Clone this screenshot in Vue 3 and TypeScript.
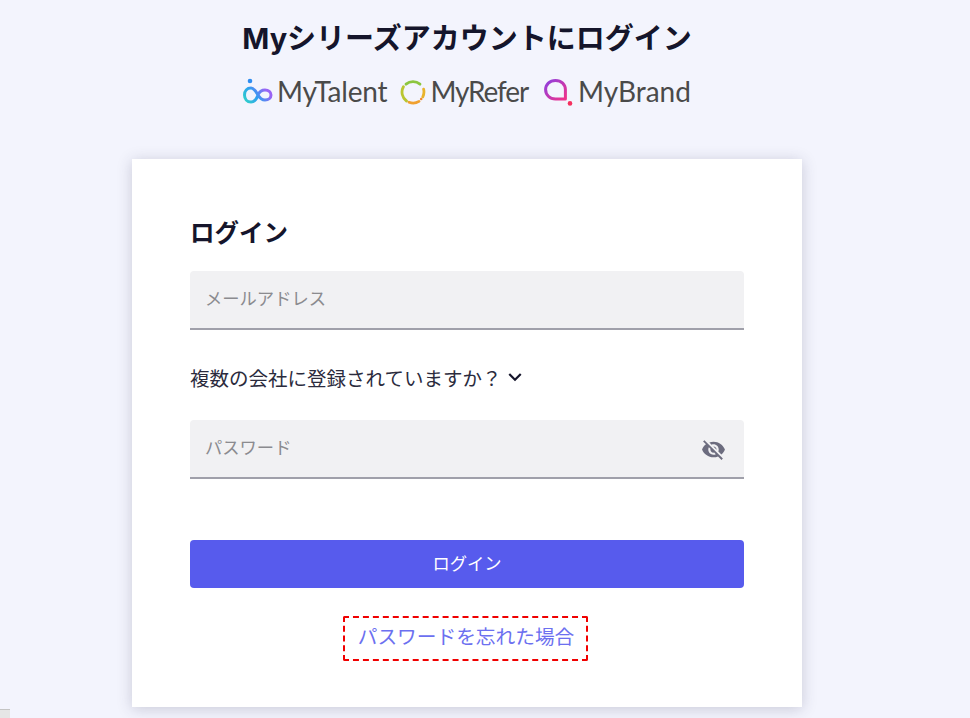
<script setup lang="ts">
import { ref } from 'vue'

// Login form for the My series. Logos are inline SVG marks next to real text.

const email = ref('')
const password = ref('')
const showPassword = ref(false)
</script>

<template>
  <div class="page">
    <div class="column">
      <header class="head">
        <h1 class="head__title">Myシリーズアカウントにログイン</h1>
        <div class="brands">
          <div class="brand brand--talent">
            <svg class="brand__mark" width="30" height="28" viewBox="0 0 30 28" fill="none">
              <defs>
                <linearGradient id="talentGrad" x1="0" y1="1" x2="1" y2="0.6">
                  <stop offset="0" stop-color="#2fd3c8" />
                  <stop offset="0.5" stop-color="#2f9ff0" />
                  <stop offset="1" stop-color="#9a63f5" />
                </linearGradient>
              </defs>
              <circle cx="7" cy="3" r="2.3" fill="#2f8df0" />
              <path
                d="M15 17C12.5 13 11 10 8 10C4 10 1.5 13 1.5 17C1.5 21 4 24 8 24C12 24 14 20 15 17C16.5 13.5 18.5 12 22 12C25.5 12 28 14 28 17C28 20 25.5 22 22 22C19 22 17 20.5 15 17Z"
                stroke="url(#talentGrad)"
                stroke-width="3"
              />
            </svg>
            <span class="brand__name">MyTalent</span>
          </div>
          <div class="brand brand--refer">
            <svg class="brand__mark" width="26" height="26" viewBox="0 0 26 26" fill="none">
              <path d="M6 5.2A11 11 0 0 1 20 5.2" stroke="#8cc63f" stroke-width="2.8" stroke-linecap="round" />
              <path d="M3.4 7.8A11 11 0 0 0 6.5 22" stroke="#b9c531" stroke-width="2.8" stroke-linecap="round" />
              <path d="M9 23.2A11 11 0 0 0 19 22.4" stroke="#f0a030" stroke-width="2.8" stroke-linecap="round" />
              <path d="M23.6 10.2A11 11 0 0 1 22.8 17.8" stroke="#e8b32c" stroke-width="2.8" stroke-linecap="round" />
              <circle cx="21.2" cy="20" r="1.3" fill="#ef8a2e" />
            </svg>
            <span class="brand__name">MyRefer</span>
          </div>
          <div class="brand brand--mybrand">
            <svg class="brand__mark" width="29" height="28" viewBox="0 0 29 28" fill="none">
              <defs>
                <linearGradient id="brandGrad" x1="0" y1="0" x2="1" y2="1">
                  <stop offset="0" stop-color="#8d3fe0" />
                  <stop offset="1" stop-color="#f0328a" />
                </linearGradient>
              </defs>
              <path
                d="M11.5 2.4C5.6 2.4 1.6 6.6 1.6 11.6C1.6 16.8 5.6 21 11.5 21H21.4V11.6C21.4 6.6 17.4 2.4 11.5 2.4Z"
                stroke="url(#brandGrad)"
                stroke-width="3"
                stroke-linejoin="round"
              />
              <circle cx="26" cy="25.4" r="2.3" fill="#f5305f" />
            </svg>
            <span class="brand__name">MyBrand</span>
          </div>
        </div>
      </header>

      <main class="card">
        <h2 class="card__title">ログイン</h2>
        <input v-model="email" class="field" type="email" placeholder="メールアドレス" />
        <button type="button" class="multi">
          複数の会社に登録されていますか？
          <svg width="26" height="26" viewBox="0 0 24 24" fill="currentColor">
            <path d="M16.59 8.59 12 13.17 7.41 8.59 6 10l6 6 6-6z" />
          </svg>
        </button>
        <div class="password">
          <input
            v-model="password"
            class="field"
            :type="showPassword ? 'text' : 'password'"
            placeholder="パスワード"
          />
          <button
            type="button"
            class="password__eye"
            aria-label="Toggle password"
            @click="showPassword = !showPassword"
          >
            <svg width="25" height="25" viewBox="0 0 24 24" fill="currentColor">
              <path
                d="M12 7c2.76 0 5 2.24 5 5 0 .65-.13 1.26-.36 1.83l2.92 2.92c1.51-1.26 2.7-2.89 3.43-4.75-1.73-4.39-6-7.5-11-7.5-1.4 0-2.74.25-3.98.7l2.16 2.16C10.74 7.13 11.35 7 12 7zM2 4.27l2.28 2.28.46.46C3.08 8.3 1.78 10.02 1 12c1.73 4.39 6 7.5 11 7.5 1.55 0 3.03-.3 4.38-.84l.42.42L19.73 22 21 20.73 3.27 3 2 4.27zM7.53 9.8l1.55 1.55c-.05.21-.08.43-.08.65 0 1.66 1.34 3 3 3 .22 0 .44-.03.65-.08l1.55 1.55c-.67.33-1.41.53-2.2.53-2.76 0-5-2.24-5-5 0-.79.2-1.53.53-2.2zm4.31-.78l3.15 3.15.02-.16c0-1.66-1.34-3-3-3l-.17.01z"
              />
            </svg>
          </button>
        </div>
        <button type="button" class="submit">ログイン</button>
        <a class="forgot" href="#" @click.prevent>パスワードを忘れた場合</a>
      </main>
    </div>
    <div class="corner"></div>
  </div>
</template>

<style>
html,
body {
  margin: 0;
  overflow: hidden;
}
</style>

<style scoped>
.page {
  position: relative;
  height: 718px;
  overflow: hidden;
  background: #f3f4fd;
  font-family: Inter, 'Noto Sans CJK JP', sans-serif;
  color: #2b2b3d;
}
.column {
  width: 670px;
  margin-left: 132px;
}
.head {
  display: flex;
  flex-direction: column;
  align-items: center;
  height: 159px;
}
.head__title {
  margin: 19px 0 0;
  font-size: 29px;
  line-height: 40px;
  font-weight: 700;
  color: #15152b;
}
.brands {
  display: flex;
  align-items: center;
  margin-top: 16px;
  height: 34px;
}
.brand {
  display: flex;
  align-items: center;
}
.brand__name {
  margin-bottom: 2px;
  font-family: Lato, sans-serif;
  font-size: 28px;
  line-height: 34px;
  color: #4a4a4a;
}
.brand--talent .brand__name {
  margin-left: 4px;
  letter-spacing: -0.2px;
}
.brand--refer {
  margin-left: 13px;
}
.brand--refer .brand__name {
  margin-left: 4px;
  letter-spacing: -1.1px;
}
.brand--mybrand {
  margin-left: 16px;
}
.brand--mybrand .brand__name {
  margin-left: 5px;
}
.card {
  display: flex;
  flex-direction: column;
  height: 548px;
  box-sizing: border-box;
  padding: 57px 58px 0;
  background: #fff;
  box-shadow: 0 2px 14px rgba(50, 50, 80, 0.22);
}
.card__title {
  margin: 0;
  font-size: 24.5px;
  line-height: 34px;
  font-weight: 700;
  color: #15152b;
}
.field {
  display: block;
  width: 100%;
  height: 59px;
  box-sizing: border-box;
  margin-top: 21px;
  padding: 0 15px 3px;
  border: none;
  border-bottom: 2px solid #a0a0aa;
  border-radius: 4px 4px 0 0;
  background: #f1f1f3;
  font-family: inherit;
  font-size: 17.3px;
  color: #2b2b3d;
  outline: none;
}
.field::placeholder {
  color: #8b8b8f;
  opacity: 1;
}
.multi {
  display: flex;
  align-items: center;
  gap: 1px;
  align-self: flex-start;
  margin-top: 33px;
  padding: 0;
  height: 28px;
  border: none;
  background: none;
  font-family: inherit;
  font-size: 19.5px;
  color: #2b2b3d;
}
.multi svg {
  color: #15152b;
}
.password {
  position: relative;
  margin-top: 8px;
}
.password__eye {
  position: absolute;
  top: 38px;
  right: 18px;
  display: flex;
  padding: 0;
  border: none;
  background: none;
  color: #6c6c7e;
}
.submit {
  height: 48px;
  margin-top: 61px;
  padding: 0 0 4px;
  border: none;
  border-radius: 4px;
  background: #575bed;
  font-family: inherit;
  font-size: 17.3px;
  color: #fff;
}
.forgot {
  align-self: center;
  margin-top: 28px;
  margin-right: 3px;
  padding: 0 12px 0 13px;
  height: 45px;
  box-sizing: border-box;
  line-height: 39px;
  border: 2px dashed #f00000;
  border-radius: 2px;
  font-size: 19.7px;
  color: #6c70f0;
  text-decoration: none;
}
.corner {
  position: absolute;
  left: 0;
  bottom: 0;
  width: 10px;
  height: 9px;
  border-top: 1px solid #c4c4c4;
  box-sizing: border-box;
  background: #e6e6e6;
}
</style>
